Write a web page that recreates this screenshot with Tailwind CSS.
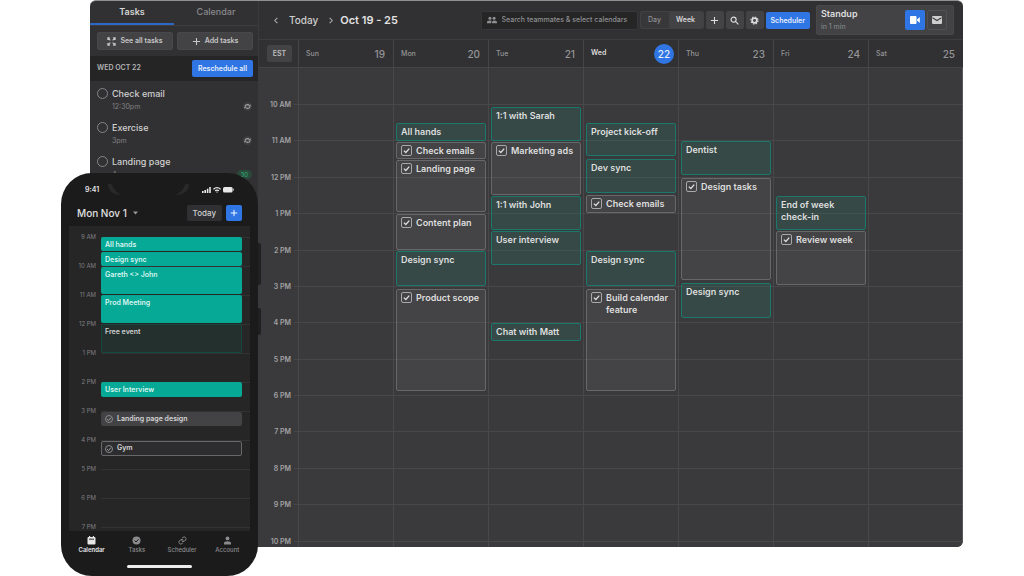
<!DOCTYPE html>
<html lang="en">
<head>
<meta charset="utf-8">
<meta name="viewport" content="width=device-width, initial-scale=1">
<title>Week calendar</title>
<script src="https://cdn.jsdelivr.net/npm/@tailwindcss/browser@4"></script>
</head>
<body class="bg-white font-['Inter',sans-serif] text-[#dcdcdc]">
<svg class="hidden">
  <symbol id="tick" viewBox="0 0 10 10"><path d="M2.6 5.1l1.8 1.7 3.1-3.5" fill="none" stroke="currentColor" stroke-width="1.2"/></symbol>
  <symbol id="plus" viewBox="0 0 10 10"><path d="M5 1v8M1 5h8" stroke="currentColor" stroke-width="1.2"/></symbol>
  <symbol id="repeat" viewBox="0 0 10 10"><path d="M2.200 4.600Q3 2.900 5 2.900q1.300 0 2.200 1M7.800 5.400Q7 7.100 5 7.100q-1.300 0-2.200-1" fill="none" stroke="currentColor" stroke-width="1.200"/><path d="M8.500 2.500v2.400H6zM1.500 7.500V5.100H4z" fill="currentColor"/></symbol>
</svg>

<div class="relative min-h-screen overflow-hidden">
<div class="ml-[90px] mr-[61px] flex overflow-hidden rounded-md border-t border-[#8e9192] bg-[#313133]">

  <aside class="w-[169px] shrink-0 border-r border-[#3a3a3c]">
    <div class="grid grid-cols-2 border-b border-[#3d3d3f] text-[9px] leading-[22px]">
      <button class="border-b-2 border-[#2c68c4] font-semibold text-[#d6d6d6]">Tasks</button>
      <button class="border-b-2 border-transparent font-medium text-[#89898b]">Calendar</button>
    </div>
    <div class="grid grid-cols-2 gap-1 py-[6px] pr-[5px] pl-[7px] text-[7px] font-semibold leading-4 text-[#c6c6c6]">
      <button class="flex items-center justify-center gap-1 rounded-xs border border-[#48484a] bg-[#434346]">
        <svg class="size-[9px]" viewBox="0 0 10 10" fill="none" stroke="currentColor" stroke-width="1.300"><path d="M1 3.200V1h2.200M6.800 1H9v2.200M9 6.800V9H6.800M3.200 9H1V6.800M1 1l2.700 2.700M9 1L6.300 3.700M9 9L6.300 6.300M1 9l2.700-2.700"/></svg>
        See all tasks</button>
      <button class="flex items-center justify-center gap-1 rounded-xs border border-[#48484a] bg-[#434346]">
        <svg class="size-[9px]"><use href="#plus"/></svg>Add tasks</button>
    </div>
    <div class="flex items-center justify-between bg-[#252526] py-1 pr-[5px] pl-[7px] text-[7px] font-semibold">
      <h2 class="text-[#b4b4b4]">WED OCT 22</h2>
      <button class="rounded-xs bg-[#2f75e4] px-[6px] leading-[17px] text-[#e8eefb]">Reschedule all</button>
    </div>
    <ul id="tasks" class="pt-[6px]"></ul>
  </aside>

  <main class="min-w-0 flex-1">
    <header class="flex h-[39px] items-center border-b border-[#3d3d3f] pr-[9px] pl-[14px]">
      <button aria-label="Previous week" class="text-[#b0b0b0]"><svg class="size-[7px]" viewBox="0 0 8 8"><path d="M5 1L2 4l3 3" fill="none" stroke="currentColor" stroke-width="1.2"/></svg></button>
      <button class="ml-[9px] text-[10px] font-medium text-[#cdcdcd]">Today</button>
      <button aria-label="Next week" class="ml-[9px] text-[#b0b0b0]"><svg class="size-[7px]" viewBox="0 0 8 8"><path d="M3 1l3 3-3 3" fill="none" stroke="currentColor" stroke-width="1.2"/></svg></button>
      <h1 class="ml-[6px] text-[11px] font-semibold whitespace-nowrap text-[#e2e2e2]">Oct 19 - 25</h1>
      <label class="ml-auto flex h-[19px] w-[157px] items-center gap-[5px] rounded-xs border border-[#373739] bg-[#252526] px-[5px] text-[#8f8f91]">
        <svg class="h-[8px] w-[10px] shrink-0" viewBox="0 0 12 9" fill="currentColor"><circle cx="3.500" cy="2.400" r="1.800"/><circle cx="8.500" cy="2.400" r="1.800"/><path d="M0 8.500V7q0-2 3.500-2T5.600 5.400Q5 6 5 8.500zM6 8.500V7q0-2 2.700-2Q12 5 12 7v1.500z"/></svg>
        <input aria-label="Search teammates" placeholder="Search teammates &amp; select calendars" class="min-w-0 flex-1 text-[7px] font-medium outline-none placeholder:text-[#8f8f91]">
      </label>
      <div class="ml-[2px] flex rounded-xs border border-[#414143] bg-[#38383a] text-[7px] leading-4">
        <button class="w-7 font-medium text-[#919193]">Day</button>
        <button class="w-[34px] rounded-xs bg-[#434346] font-semibold text-[#d6d6d6]">Week</button>
      </div>
      <button aria-label="Add" class="ml-[2px] grid size-[18px] place-items-center rounded-xs bg-[#434346]"><svg class="size-[9px]"><use href="#plus"/></svg></button>
      <button aria-label="Search" class="ml-[2px] grid size-[18px] place-items-center rounded-xs bg-[#434346]"><svg class="size-[9px]" viewBox="0 0 10 10" fill="none" stroke="currentColor" stroke-width="1.300"><circle cx="4" cy="4" r="2.800"/><path d="M6 6l3.300 3.300"/></svg></button>
      <button aria-label="Settings" class="ml-[2px] grid size-[18px] place-items-center rounded-xs bg-[#434346]"><svg class="size-[9px]" viewBox="0 0 10 10" fill="none" stroke="currentColor"><circle cx="5" cy="5" r="2.600" stroke-width="1.900"/><circle cx="5" cy="5" r="4" stroke-width="1.200" stroke-dasharray="1.600 1.540"/></svg></button>
      <button class="ml-[2px] rounded-xs bg-[#2f75e4] px-[5px] text-[7px] font-semibold leading-[17px] text-[#e8eefb]">Scheduler</button>
      <section class="ml-[6px] flex h-[30px] w-[138px] items-center gap-[2px] rounded-xs border border-[#48484a] bg-[#434346] pr-[6px] pl-[4px]">
        <div class="mr-auto">
          <h3 class="text-[9px] font-semibold leading-[13px] text-[#dedede]">Standup</h3>
          <p class="text-[7px] leading-[13px] text-[#8a918d]">in 1 min</p>
        </div>
        <button aria-label="Join video call" class="grid size-5 place-items-center rounded-xs bg-[#2f75e4] text-white"><svg class="h-[8px] w-[10px]" viewBox="0 0 10 8" fill="currentColor"><rect width="6.500" height="8" rx="1"/><path d="M7 3.500L9.800 1v6L7 4.500z"/></svg></button>
        <button aria-label="Send message" class="grid size-5 place-items-center rounded-xs border border-[#525254] text-[#cfcfcf]"><svg class="h-[8px] w-[10px]" viewBox="0 0 10 8"><rect width="10" height="8" rx="1" fill="currentColor"/><path d="M.5 1.700L5 4.500l4.500-2.800" fill="none" stroke="#434346" stroke-width="1.100"/></svg></button>
      </section>
    </header>

    <div class="flex h-7 border-b border-[#454547]">
      <div class="grid w-[39px] shrink-0 place-items-center pl-[2px]">
        <button class="w-[25px] rounded-xs bg-[#434346] text-[7px] font-semibold leading-[17px] text-[#c0c0c0]">EST</button>
      </div>
      <div id="dayNames" class="grid flex-1 grid-cols-7"></div>
    </div>

    <div class="flex h-[479px] overflow-hidden rounded-br-md border-r border-[#58585a] bg-[#3a3a3c]">
      <div class="w-[39px] shrink-0 pt-[37px] pr-[7px] text-right text-[7px] font-semibold text-[#a2a2a4]">
        <div id="hours" class="grid h-[473px] auto-rows-fr"></div>
      </div>
      <div class="relative flex-1">
        <div id="lines" class="absolute inset-x-0 top-9 -ml-1 grid h-[473px] auto-rows-fr"></div>
        <div id="week" class="relative -mr-px grid h-full grid-cols-7"></div>
      </div>
    </div>
  </main>
</div>

<div class="absolute top-[173px] left-[61px] w-[197px]">
  <i class="absolute top-[70px] -right-[3px] h-[42px] w-1 rounded-r-xs bg-[#202021]"></i>
  <i class="absolute top-[135px] -right-[3px] h-[27px] w-1 rounded-r-xs bg-[#202021]"></i>
  <section class="relative rounded-[31px] bg-[#1b1b1c] px-2 pb-[8px]">
    <div class="flex h-[28px] items-center justify-between px-4 pt-[6px] text-[7px] font-semibold text-[#e8e8e8]">
      <time>9:41</time>
      <div class="flex flex-1 items-start justify-between pr-3 pl-2">
        <svg class="h-[12px] w-[15px]" viewBox="0 0 15 12" fill="#29292a"><path d="M1 0q0 5 3.500 8T15 11Q8 9 4.500 0z"/></svg>
        <svg class="h-[12px] w-[15px]" viewBox="0 0 15 12" fill="#29292a"><path d="M14 0q0 5-3.500 8T0 11Q7 9 10.500 0z"/></svg>
      </div>
      <div class="flex items-center gap-[2px]">
        <svg class="h-[6px] w-[9px]" viewBox="0 0 9 6" fill="currentColor"><path d="M0 4h1.600v2H0zM2.400 3H4v3H2.400zM4.800 1.700h1.600V6H4.800zM7.200 0h1.600v6H7.200z"/></svg>
        <svg class="h-[6px] w-[8px]" viewBox="0 0 8 6" fill="none" stroke="currentColor" stroke-width="1.200"><path d="M.4 2.300Q4-1 7.600 2.300M2 3.900q2-1.700 4 0M3.500 5.200h1"/></svg>
        <svg class="h-[6px] w-[11px]" viewBox="0 0 11 6" fill="currentColor"><rect width="9.600" height="5.400" rx="1.500"/><path d="M10.100 1.800h.8v1.800h-.8z"/></svg>
      </div>
    </div>
    <div class="flex items-center gap-1 px-[8px] pt-[4px] pb-[5px]">
      <button class="mr-auto flex items-center gap-[6px] text-[10px] font-medium text-[#e0e0e0]">Mon Nov 1
        <svg class="h-[4px] w-[5px]" viewBox="0 0 5 4"><path d="M0 .5h5L2.500 3.500z" fill="#9a9a9c"/></svg></button>
      <button class="rounded-xs bg-[#303033] px-[6px] text-[8px] font-medium leading-4 text-[#cfcfcf]">Today</button>
      <button aria-label="New event" class="grid size-4 place-items-center rounded-xs bg-[#2f75e4] text-white"><svg class="size-2"><use href="#plus"/></svg></button>
    </div>
    <div class="flex h-[305px] overflow-hidden bg-[#262627] pt-[11px]">
      <div id="phoneHours" class="w-8 shrink-0 pr-[5px] text-right text-[6px] text-[#7f7f81]"></div>
      <div class="relative flex-1">
        <div id="phoneLines" class="absolute inset-0"></div>
        <div id="phoneEvents" class="relative mr-2"></div>
      </div>
    </div>
    <nav class="grid grid-cols-4 pt-[5px] text-center text-[6px] font-medium leading-[10px] text-[#8b8b8d]">
      <a href="#calendar" class="flex flex-col items-center font-semibold text-[#e6e6e6]"><svg class="size-[9px]" viewBox="0 0 9 9"><path d="M1.500 1H2V0h1.200v1h2.600V0H7v1h.5q1 0 1 1v5.500q0 1-1 1h-6q-1 0-1-1V2q0-1 1-1z" fill="currentColor"/><path d="M2 3.200h5" stroke="#1b1b1c" stroke-width=".9"/></svg>Calendar</a>
      <a href="#tasks" class="flex flex-col items-center"><svg class="size-[9px]" viewBox="0 0 9 9"><circle cx="4.500" cy="4.500" r="4" fill="currentColor"/><path d="M2.600 4.600L4 6l2.600-2.800" fill="none" stroke="#1b1b1c" stroke-width="1"/></svg>Tasks</a>
      <a href="#scheduler" class="flex flex-col items-center"><svg class="size-[9px]" viewBox="0 0 24 24" fill="none" stroke="currentColor" stroke-width="2.600" stroke-linecap="round"><path d="M10 13a5 5 0 0 0 7.500.5l3-3a5 5 0 0 0-7-7l-1.800 1.700"/><path d="M14 11a5 5 0 0 0-7.500-.5l-3 3a5 5 0 0 0 7 7l1.800-1.700"/></svg>Scheduler</a>
      <a href="#account" class="flex flex-col items-center"><svg class="size-[9px]" viewBox="0 0 9 9" fill="currentColor"><circle cx="4.500" cy="2.400" r="1.900"/><path d="M1 8.500V7.200Q1 5.300 4.500 5.300T8 7.200v1.300z"/></svg>Account</a>
    </nav>
    <div class="mx-auto mt-[10px] h-[3px] w-[65px] rounded-full bg-[#ececec]"></div>
  </section>
</div>
</div>

<script>
const el = id => document.getElementById(id);
const hourNames = (from, count) => Array.from({length: count}, (_, i) => {
  const h = from + i;
  return `${h > 12 ? h - 12 : h} ${h < 12 ? 'AM' : 'PM'}`;
});

// Sidebar tasks: title, time, optional tag
el('tasks').innerHTML = [['Check email', '12:30pm'], ['Exercise', '3pm'], ['Landing page', '4pm', '30']].map(([title, time, tag]) => `
  <li class="flex h-[34px] gap-[4px] pr-[6px] pl-[7px]">
    <input type="checkbox" aria-label="${title}" class="mt-[1px] size-[11px] appearance-none rounded-full border border-[#858587]">
    <div class="flex-1 leading-[13px]">
      <p class="text-[9px] font-medium text-[#d0d0d0]">${title}</p>
      <p class="flex items-center justify-between text-[7px] text-[#818183]">${time}
        ${tag ? `<span class="rounded-full bg-[#2a4a3c] px-1 text-[6px] leading-[9px] text-[#2fb573]">${tag}</span>`
              : '<svg class="size-[9px] rounded-full bg-[#3d3d3f] text-[#a6a6a8]"><use href="#repeat"/></svg>'}</p>
    </div>
  </li>`).join('');

el('dayNames').innerHTML = ['Sun', 'Mon', 'Tue', 'Wed', 'Thu', 'Fri', 'Sat'].map((d, i) => d === 'Wed'
  ? `<div class="flex items-center justify-between border-l border-[#454547] pr-1 pl-[7px]"><span class="text-[7px] font-semibold text-[#dedede]">${d}</span><span class="size-5 rounded-full bg-[#2f75e4] text-center text-[10px] font-medium leading-5 text-[#e8eefb]">${19 + i}</span></div>`
  : `<div class="flex items-center justify-between border-l border-[#454547] pt-[2px] pr-2 pl-[7px] text-[#949496]"><span class="text-[7px] font-medium">${d}</span><span class="text-[10px] font-medium">${19 + i}</span></div>`).join('');

el('hours').innerHTML = hourNames(10, 13).map(h => `<span class="-translate-y-1/2 self-start leading-3">${h}</span>`).join('');
el('lines').innerHTML = '<div class="border-t border-[#48484a]"></div>'.repeat(13);

// Week events per day: start, height, title, kind (e = event, t = task), measured from the top of the grid
const week = [
  [],
  [[55, 18, 'All hands', 'e'], [74, 17, 'Check emails', 't'], [92, 52, 'Landing page', 't'], [146, 36, 'Content plan', 't'], [183, 35, 'Design sync', 'e'], [221, 102, 'Product scope', 't']],
  [[39, 34, '1:1 with Sarah', 'e'], [74, 53, 'Marketing ads', 't'], [128, 34, '1:1 with John', 'e'], [163, 34, 'User interview', 'e'], [255, 18, 'Chat with Matt', 'e']],
  [[55, 33, 'Project kick-off', 'e'], [91, 34, 'Dev sync', 'e'], [127, 18, 'Check emails', 't'], [183, 35, 'Design sync', 'e'], [221, 102, 'Build calendar feature', 't']],
  [[73, 34, 'Dentist', 'e'], [110, 102, 'Design tasks', 't'], [215, 35, 'Design sync', 'e']],
  [[128, 34, 'End of week check-in', 'e'], [163, 54, 'Review week', 't']],
  []
];
el('week').innerHTML = week.map(day => {
  let y = 0;
  return `<div class="border-l border-[#48484a] px-[2px]">${day.map(([top, height, title, kind]) => {
    const size = `margin-top:${top - y}px;height:${height}px`;
    y = top + height;
    return kind === 'e'
      ? `<article class="rounded-xs border border-[#1b786b] bg-[#2f6d64]/30 px-1 py-[2px] text-[9px] font-semibold leading-3 text-[#dedede]" style="${size}">${title}</article>`
      : `<label class="flex gap-1 rounded-xs border border-[#68686a] bg-white/5 px-1 py-[2px] text-[9px] font-semibold leading-3 text-[#dedede]" style="${size}">
          <span class="relative size-[11px] shrink-0"><input type="checkbox" checked class="block size-[11px] appearance-none rounded-xs border border-[#a8a8aa]"><svg class="pointer-events-none absolute inset-0 size-[11px]"><use href="#tick"/></svg></span>
          <span>${title}</span></label>`;
  }).join('')}</div>`;
}).join('');

// Phone day view
el('phoneHours').innerHTML = hourNames(9, 11).map(h => `<div class="h-[29px]"><span class="block -translate-y-1/2 leading-2">${h}</span></div>`).join('');
el('phoneLines').innerHTML = '<div class="h-[29px] border-t border-[#333334]"></div>'.repeat(11);
const kinds = {
  solid: 'block rounded-xs px-1 text-[7px] font-semibold leading-[15px] bg-[#06a896] text-[#d8f5f0]',
  free: 'block rounded-xs px-[3px] text-[7px] font-semibold leading-[13px] border border-[#15493f] bg-[#23302e] text-[#d0d0d0]',
  task: 'flex items-center gap-1 rounded-xs px-1 text-[7px] font-semibold bg-[#434346] text-[#d6d6d6]',
  open: 'flex items-center gap-1 rounded-xs px-[3px] text-[7px] font-semibold border border-[#68686a] bg-[#2d2d2f] text-[#d6d6d6]'
};
let py = 0;
el('phoneEvents').innerHTML = [
  [0, 14, 'All hands', 'solid'], [15, 14, 'Design sync', 'solid'], [30, 27, 'Gareth &lt;&gt; John', 'solid'], [58, 28, 'Prod Meeting', 'solid'],
  [87, 29, 'Free event', 'free'], [145, 15, 'User Interview', 'solid'], [175, 14, 'Landing page design', 'task'], [204, 15, 'Gym', 'open']
].map(([top, height, title, kind]) => {
  const size = `margin-top:${top - py}px;height:${height}px`;
  py = top + height;
  const check = '<span class="relative size-2 shrink-0"><input type="checkbox" checked class="block size-2 appearance-none rounded-full border border-[#8a8a8c]"><svg class="pointer-events-none absolute inset-0 size-2 text-[#a0a0a2]"><use href="#tick"/></svg></span>';
  return kind === 'task' || kind === 'open'
    ? `<label class="${kinds[kind]}" style="${size}">${check}<span>${title}</span></label>`
    : `<article class="${kinds[kind]}" style="${size}">${title}</article>`;
}).join('');
</script>
</body>
</html>
